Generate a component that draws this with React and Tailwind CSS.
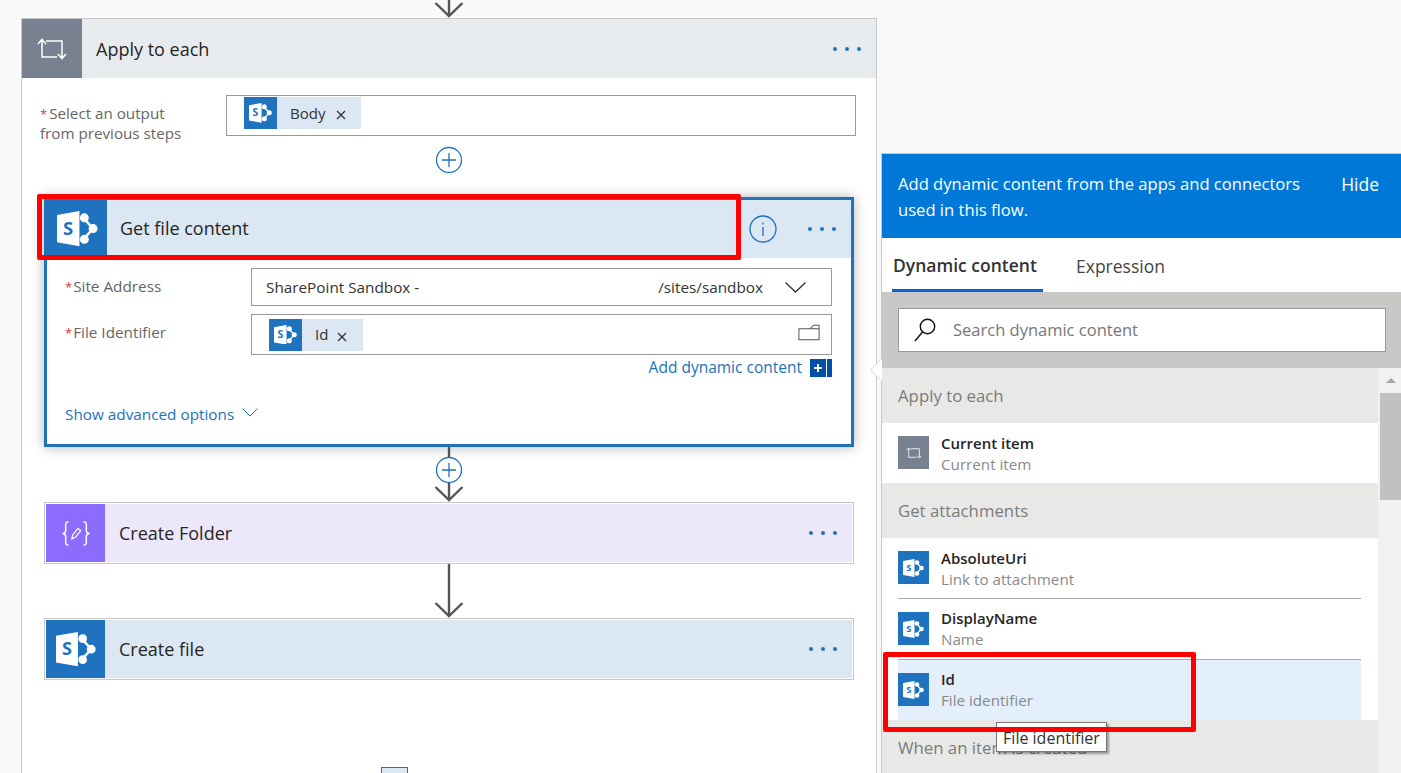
import React from 'react';

const FONT = 'font-["Open_Sans","Noto_Sans",sans-serif]';

// SharePoint logo, scales with the width passed in
const SharePointIcon = ({ className }) => (
  <svg viewBox="0 0 42 36" className={className}>
    <path d="M27 7 L37 18 L27 29" fill="none" stroke="#fff" strokeWidth="2.5" />
    <circle cx="28" cy="7" r="4.6" fill="#fff" />
    <circle cx="37" cy="18" r="4.6" fill="#fff" />
    <circle cx="28" cy="29" r="4.6" fill="#fff" />
    <polygon points="0,4 23,0 23,36 0,32" fill="#fff" />
    <text x="11.5" y="24.5" textAnchor="middle" fontSize="19" fontWeight="700" fill="#1f72be" fontFamily="Open Sans, sans-serif">S</text>
  </svg>
);

const LoopIcon = ({ className }) => (
  <svg viewBox="0 0 30 22" className={className} fill="none" stroke="#fff" strokeWidth="1.5">
    <path d="M1 6 L5 1.5 L9 6 M5 2 V19 H20" />
    <path d="M21 16 L25 20.5 L29 16 M25 20 V3 H9" />
  </svg>
);

const ExpressionIcon = () => (
  <svg viewBox="0 0 32 28" className="w-[30px] h-[27px]" fill="none" stroke="#fff" strokeWidth="1.6">
    <path d="M8 1.5 C4.5 1.5 5 4 5 7 V10.5 C5 12.5 3.5 14 1.5 14 C3.5 14 5 15.5 5 17.5 V21 C5 24 4.5 26.5 8 26.5" />
    <path d="M24 1.5 C27.5 1.5 27 4 27 7 V10.5 C27 12.5 28.5 14 30.5 14 C28.5 14 27 15.5 27 17.5 V21 C27 24 27.5 26.5 24 26.5" />
    <path d="M11.5 19.5 L12.5 15.5 L18 8.5 L21 11 L15.5 18 Z" strokeWidth="1.3" />
  </svg>
);

const Dots = () => (
  <div className="flex gap-[8px]">
    <span className="w-[4px] h-[4px] rounded-full bg-[#1f72be]" />
    <span className="w-[4px] h-[4px] rounded-full bg-[#1f72be]" />
    <span className="w-[4px] h-[4px] rounded-full bg-[#1f72be]" />
  </div>
);

const PlusCircle = ({ cy }) => (
  <g>
    <circle cx="15" cy={cy} r="12.5" fill="#fff" stroke="#1f72be" strokeWidth="1.3" />
    <path d={`M15 ${cy - 7} V${cy + 7} M8 ${cy} H22`} stroke="#1f72be" strokeWidth="1.3" />
  </g>
);

// Line with an arrow head at the bottom, optional plus button
const Connector = ({ height, plusAt, lineFrom = 0 }) => (
  <svg width="30" height={height} className="block mx-auto">
    <path d={`M15 ${lineFrom} V${height - 2}`} stroke="#555" strokeWidth="2.4" />
    <path d={`M1.5 ${height - 15} L15 ${height - 2} L28.5 ${height - 15}`} fill="none" stroke="#555" strokeWidth="2.4" />
    {plusAt && <PlusCircle cy={plusAt} />}
  </svg>
);

const ActionCard = ({ title, bar, iconBg, icon }) => (
  <div className="w-[810px] h-[62px] mx-auto border border-[#c8c8c8] bg-white p-px">
    <div className={`h-full flex items-center ${bar}`}>
      <div className={`w-[59px] h-full flex items-center justify-center ${iconBg}`}>{icon}</div>
      <span className="ml-[14px] text-[18px] text-[#252525]">{title}</span>
      <div className="ml-auto mr-[15px]"><Dots /></div>
    </div>
  </div>
);

const Token = ({ label, width, closeGap }) => (
  <div className={`h-[32px] flex items-center bg-[#dce7f4] ${width}`}>
    <div className="w-[33px] h-full bg-[#1f72be] flex items-center justify-center shrink-0">
      <SharePointIcon className="w-[23px]" />
    </div>
    <span className="ml-[13px] text-[15px] text-[#333]">{label}</span>
    <svg viewBox="0 0 10 10" className={`w-[10px] h-[10px] mt-[4px] ${closeGap}`} stroke="#333" strokeWidth="1.3"><path d="M1 1 L9 9 M9 1 L1 9" /></svg>
  </div>
);

const Required = ({ gap }) => <span className={`text-[#d9363e] text-[13px] ${gap}`}>*</span>;

const Section = ({ title }) => (
  <div className="h-[55px] pt-px bg-[#e8e9e7] flex items-center px-[16px] text-[16.8px] text-[#7b7b7b]">{title}</div>
);

const Item = ({ name, sub, icon, divider, active, textTop = 'mt-[9px]' }) => (
  <div className={`px-[16px] ${divider ? 'h-[61px]' : 'h-[60px]'}`}>
    <div className={`h-full flex ${divider ? 'border-b border-[#aaa]' : ''} ${active ? 'bg-[#e3effb]' : ''} w-[463px]`}>
      <div className="mt-[13px] w-[31px] h-[33px] bg-[#1f72be] flex items-center justify-center shrink-0">
        {icon || <SharePointIcon className="w-[21px]" />}
      </div>
      <div className={`ml-[12px] ${textTop}`}>
        <div className="text-[15px] leading-[21px] font-semibold text-[#252525]">{name}</div>
        <div className="text-[15.2px] leading-[21px] text-[#8a8a8a]">{sub}</div>
      </div>
    </div>
  </div>
);

const LeftColumn = () => (
  <div className="w-[877px] shrink-0 pl-[21px]">
    <div className="w-[856px] h-[18px] overflow-hidden flex items-end justify-center">
      <Connector height={18} />
    </div>
    <div className="w-[856px] h-[755px] border border-b-0 border-[#c8c8c8] bg-white">
      <div className="h-[59px] bg-[#e8ebee] flex items-center">
        <div className="w-[60px] h-full bg-[#77818f] flex items-center justify-center">
          <LoopIcon className="w-[30px] h-[22px]" />
        </div>
        <span className="ml-[14px] mt-[2px] text-[18px] text-[#252525]">Apply to each</span>
        <div className="ml-auto mr-[15px]"><Dots /></div>
      </div>

      <div className="flex h-[41px] mt-[17px] pl-[18px]">
        <div className="w-[186px] pt-[8px] text-[15.2px] leading-[20px] text-[#666]">
          <div className="h-[20px]"><Required gap="mr-[2px]" />Select an output</div>
          <div className="h-[20px]">from previous steps</div>
        </div>
        <div className="w-[630px] h-[41px] border border-[#999] pl-[17px] pt-px">
          <Token label="Body" width="w-[117px]" closeGap="ml-[11px]" />
        </div>
      </div>

      <div className="mt-[10px] h-[28px]">
        <svg width="30" height="28" className="block mx-auto"><PlusCircle cy={14} /></svg>
      </div>

      {/* selected action */}
      <div className="mt-[23px] w-[810px] h-[250px] mx-auto border-[3px] border-[#2272b9] bg-white shadow-[0_0_12px_rgba(0,0,0,0.3)]">
        <div className="h-[58px] bg-[#dce7f4] flex items-center">
          <div className="w-[60px] h-full bg-[#1f72be] flex items-center justify-center">
            <SharePointIcon className="w-[41px]" />
          </div>
          <span className="ml-[13px] mb-[2px] text-[18px] text-[#252525]">Get file content</span>
          <svg viewBox="0 0 28 28" className="w-[28px] h-[28px] ml-auto mr-[31px]" fill="none" stroke="#1f72be" strokeWidth="1.3">
            <circle cx="14" cy="14" r="13" />
            <path d="M14 12 V21 M14 7.5 V9.5" />
          </svg>
          <div className="mr-[15px]"><Dots /></div>
        </div>

        <div className="mt-[10px] pl-[18px] pr-[19px]">
          <div className="flex items-center">
            <div className="w-[186px] mb-[2px] text-[15.3px] text-[#666]"><Required gap="mr-px" />Site Address</div>
            <div className="flex-1 h-[38px] border border-[#999] flex items-center pl-[14px] text-[15.3px] text-[#333]">
              <span>SharePoint Sandbox -</span>
              <span className="ml-auto">/sites/sandbox</span>
              <svg viewBox="0 0 21 11" className="w-[21px] h-[11px] ml-[22px] mr-[25px]" fill="none" stroke="#333" strokeWidth="1.3">
                <path d="M0.5 0.5 L10.5 10 L20.5 0.5" />
              </svg>
            </div>
          </div>
          <div className="flex items-center mt-[8px]">
            <div className="w-[186px] mb-[4px] text-[15.3px] text-[#666]"><Required gap="mr-px" />File Identifier</div>
            <div className="flex-1 h-[41px] border border-[#999] flex items-center pl-[17px] pr-[11px]">
              <Token label="Id" width="w-[94px]" closeGap="ml-[9px]" />
              <svg viewBox="0 0 24 18" className="w-[22px] h-[17px] ml-auto mb-[4px]" fill="none" stroke="#555" strokeWidth="1.1">
                <path d="M1 5 H13 L17 1 H23 V17 H1 Z M13 5 H23" />
              </svg>
            </div>
          </div>
          <div className="mt-[3px] h-[20px] flex items-center justify-end text-[15.5px] text-[#2272b9]">
            <span>Add dynamic content</span>
            <span className="ml-[8px] w-[22px] h-[18px] bg-[#0050a8] flex items-center pl-[3px] text-white">
              <svg viewBox="0 0 10 10" className="w-[10px] h-[10px]" stroke="#fff" strokeWidth="2"><path d="M5 1 V9 M1 5 H9" /></svg>
              <span className="w-px h-full bg-white ml-[3px]" />
            </span>
          </div>
          <div className="mt-[26px] h-[20px] flex items-center text-[15.3px] text-[#2272b9]">
            <span>Show advanced options</span>
            <svg viewBox="0 0 16 9" className="w-[16px] h-[9px] ml-[8px] mb-[4px]" fill="none" stroke="#2272b9" strokeWidth="1"><path d="M0.5 0.5 L8 8 L15.5 0.5" /></svg>
          </div>
        </div>
      </div>

      <Connector height={55} plusAt={23} />
      <ActionCard title="Create Folder" bar="bg-[#ede7fb]" iconBg="bg-[#8c6cff]" icon={<ExpressionIcon />} />
      <Connector height={54} />
      <ActionCard title="Create file" bar="bg-[#dce7f4]" iconBg="bg-[#1f72be]" icon={<SharePointIcon className="w-[40px]" />} />
      <div className="mt-[87px] ml-[359px] w-[27px] h-[6px] border border-b-0 border-[#2272b9] bg-[#dce7f4]" />
    </div>
  </div>
);

const DynamicPanel = () => (
  <div className="flex-1 pl-[4px] pt-[153px] min-w-0">
    <div className="relative h-[620px] border-l border-t border-[#c8c8c8] bg-white">
      {/* callout notch pointing at the card */}
      <div className="absolute left-[-11px] top-[205px] w-0 h-0 border-y-[11px] border-y-transparent border-r-[11px] border-r-white drop-shadow-[-1px_0_0_#d5d5d5]" />

      <div className="h-[84px] bg-[#0078d7] text-white pl-[16px] flex items-start justify-between pt-[17px] leading-[26px]">
        <div className="w-[430px] text-[16.6px]">Add dynamic content from the apps and connectors used in this flow.</div>
        <div className="mr-[22px] text-[17.5px]">Hide</div>
      </div>

      <div className="h-[54px] flex items-end pl-[10px] text-[17.5px]">
        <div className="w-[151px] h-full pt-[3px] pl-px border-b-[3px] border-[#0a64d8] flex items-center font-semibold text-[#333]">Dynamic content</div>
        <div className="ml-[33px] h-full pt-[3px] flex items-center text-[#444]">Expression</div>
      </div>

      <div className="h-[76px] bg-[#c8c9c7] pt-[16px] pl-[16px] pr-[15px]">
        <div className="h-[44px] border border-[#999] bg-white flex items-center pl-[15px] text-[16.5px] text-[#777]">
          <svg viewBox="0 0 22 24" className="w-[22px] h-[24px]" fill="none" stroke="#111" strokeWidth="1.4">
            <circle cx="13.5" cy="8.5" r="7.2" />
            <path d="M8.5 14 L1 23" />
          </svg>
          <span className="ml-[17px]">Search dynamic content</span>
        </div>
      </div>

      <div className="flex h-[406px] overflow-hidden">
        <div className="w-[496px] shrink-0">
          <Section title="Apply to each" />
          <Item
            name="Current item"
            sub="Current item"
            textTop="mt-[10px]"
            icon={<div className="w-full h-full bg-[#77818f] flex items-center justify-center"><LoopIcon className="w-[16px] h-[12px]" /></div>}
          />
          <Section title="Get attachments" />
          <Item name="AbsoluteUri" sub="Link to attachment" textTop="mt-[10px]" divider />
          <Item name="DisplayName" sub="Name" divider />
          <Item name="Id" sub="File identifier" active />
          <Section title="When an item is created" />
        </div>
        <div className="flex-1 bg-[#f1f1f1] pl-[2px]">
          <div className="h-[25px] flex items-center justify-center">
            <div className="w-0 h-0 border-x-[5px] border-x-transparent border-b-[5px] border-b-[#a6a6a6]" />
          </div>
          <div className="h-[107px] bg-[#c1c1c1]" />
        </div>
      </div>
    </div>
  </div>
);

export default function App() {
  return (
    <div className={`relative w-[1401px] h-[773px] overflow-hidden flex bg-[#f9f9f9] ${FONT}`}>
      <LeftColumn />
      <DynamicPanel />

      {/* tooltip */}
      <div className="absolute left-[996px] top-[722px] w-[111px] h-[30px] pt-[2px] border border-[#777] bg-white shadow-[2px_2px_2px_rgba(0,0,0,0.35)] flex items-center justify-center text-[16px] text-[#333]">
        File identifier
      </div>

      {/* annotation boxes drawn over the screenshot */}
      <div className="absolute left-[37px] top-[194px] w-[704px] h-[66px] border-[5px] border-[#f00] rounded-[2px]" />
      <div className="absolute left-[883px] top-[652px] w-[313px] h-[80px] border-[5px] border-[#f00] rounded-[2px]" />
    </div>
  );
}
